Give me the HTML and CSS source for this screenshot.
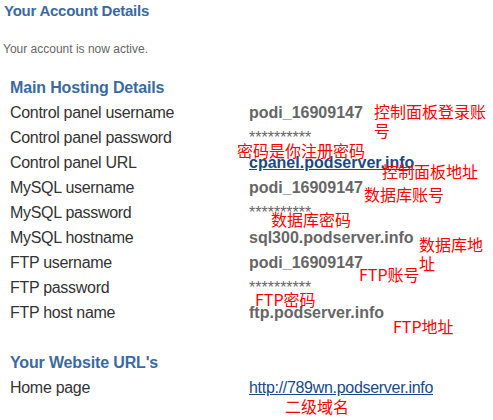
FILE: index.html
```html
<html>
<head>
	<title>Your Account Details</title>
	<meta charset="UTF-8">
	<link rel="stylesheet" href="styles.css">
</head>
<body>

	<div class="page">
		<h2 class="page-title">Your Account Details</h2>
		<p class="status">Your account is now active.</p>

		<div class="block">
			<h3>Main Hosting Details</h3>
			<div class="row"><span class="label">Control panel username</span><span class="value">podi_16909147</span></div>
			<div class="row"><span class="label">Control panel password</span><span class="value stars">**********</span></div>
			<div class="row"><span class="label">Control panel URL</span><a class="value link" href="#">cpanel.podserver.info</a></div>
			<div class="row"><span class="label">MySQL username</span><span class="value">podi_16909147</span></div>
			<div class="row"><span class="label">MySQL password</span><span class="value stars">**********</span></div>
			<div class="row"><span class="label">MySQL hostname</span><span class="value">sql300.podserver.info</span></div>
			<div class="row"><span class="label">FTP username</span><span class="value">podi_16909147</span></div>
			<div class="row"><span class="label">FTP password</span><span class="value stars">**********</span></div>
			<div class="row"><span class="label">FTP host name</span><span class="value">ftp.podserver.info</span></div>
		</div>

		<div class="block second">
			<h3>Your Website URL's</h3>
			<div class="row"><span class="label">Home page</span><a class="value link plain" href="#">http://789wn.podserver.info</a></div>
		</div>

		<!-- red notes drawn over the screenshot -->
		<span class="note n1">控制面板登录账号</span>
		<span class="note n2">密码是你注册密码</span>
		<span class="note n3">控制面板地址</span>
		<span class="note n4">数据库账号</span>
		<span class="note n5">数据库密码</span>
		<span class="note n6">数据库地址</span>
		<span class="note n7">FTP账号</span>
		<span class="note n8">FTP密码</span>
		<span class="note n9">FTP地址</span>
		<span class="note n10">二级域名</span>
	</div>

</body>
</html>
```

FILE: styles.css
```css
* {
	margin: 0;
	padding: 0;
}

body {
	background: #fff;
	font-family: "Liberation Sans", Arial, sans-serif;
	color: #333;
}

.page {
	position: relative;
	width: 493px;
	height: 420px;
	overflow: hidden;
}

.page-title {
	font-size: 15px;
	font-weight: bold;
	color: #3a6aa0;
	line-height: 22px;
	letter-spacing: -0.25px;
	padding: 0 0 0 4px;
}

.status {
	font-size: 12px;
	color: #666;
	line-height: 16px;
	margin: 19px 0 0 3px;
}

.block {
	margin: 18px 0 0 10px;
}

.block.second {
	margin-top: 25px;
}

h3 {
	font-size: 16px;
	font-weight: bold;
	color: #3a6aa0;
	line-height: 25px;
	letter-spacing: -0.15px;
}

.row {
	display: flex;
	font-size: 16px;
	line-height: 25px;
}

.label {
	width: 239px;
	color: #333;
	letter-spacing: -0.3px;
}

.value {
	font-weight: bold;
	color: #666;
}

.stars {
	font-weight: normal;
}

.link {
	color: #1a4a85;
	text-decoration: underline;
}

.link.plain {
	font-weight: normal;
	letter-spacing: -0.3px;
}

.note {
	position: absolute;
	font-family: "Noto Sans CJK SC", sans-serif;
	font-size: 16px;
	line-height: 19px;
	color: #f00;
}

.n1 { left: 374px; top: 102px; width: 118px; }
.n2 { left: 237px; top: 141px; }
.n3 { left: 382px; top: 162px; }
.n4 { left: 364px; top: 185px; }
.n5 { left: 271px; top: 210px; }
.n6 { left: 419px; top: 235px; width: 66px; }
.n7 { left: 359px; top: 265px; }
.n8 { left: 255px; top: 290px; }
.n9 { left: 393px; top: 317px; }
.n10 { left: 285px; top: 397px; }
```
